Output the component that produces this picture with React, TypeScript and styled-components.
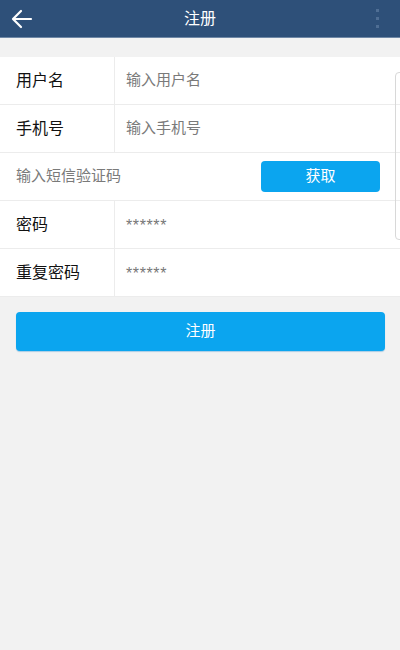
import React from "react";
import styled, { createGlobalStyle } from "styled-components";

const GlobalStyle = createGlobalStyle`
  html, body {
    margin: 0;
    padding: 0;
    background: #f2f2f2;
    font-family: "Noto Sans CJK SC", "Liberation Sans", sans-serif;
  }
`;

const Page = styled.div`
  position: relative;
  width: 400px;
  height: 650px;
  background: #f2f2f2;
  overflow: hidden;
`;

const Header = styled.header`
  height: 37px;
  background: #2e5079;
  border-bottom: 1px solid #6f88a6;
  display: flex;
  align-items: center;
  justify-content: space-between;
  padding: 0 10px 0 10px;
`;

const Title = styled.h1`
  margin: 0 0 3px 0;
  color: #ffffff;
  font-size: 16px;
  line-height: 20px;
  font-weight: 400;
`;

const IconSlot = styled.div`
  width: 24px;
  height: 24px;
  display: flex;
  align-items: center;
  justify-content: center;
`;

const Dots = styled.div`
  display: flex;
  flex-direction: column;
  gap: 5px;
  align-items: center;
`;

const Dot = styled.span`
  width: 3px;
  height: 3px;
  background: #4f6e94;
`;

const Form = styled.div`
  margin-top: 19px;
  background: #ffffff;
`;

const Row = styled.div`
  height: 47px;
  display: flex;
  align-items: stretch;
  border-bottom: 1px solid #ececec;
`;

const Label = styled.div`
  width: 98px;
  padding: 0 0 3px 16px;
  border-right: 1px solid #ececec;
  display: flex;
  align-items: center;
  font-size: 16px;
  line-height: 20px;
  color: #111111;
`;

const Field = styled.div<{ $wide?: boolean }>`
  flex: 1;
  display: flex;
  align-items: center;
  padding: 0 0 3px ${(p) => (p.$wide ? "16px" : "11px")};
  font-size: 15px;
  line-height: 20px;
  color: #7a7a7a;
`;

const Mask = styled.span`
  margin-top: 5px;
  font-size: 16px;
  letter-spacing: 0.6px;
  color: #777777;
  font-family: "Liberation Sans", sans-serif;
`;

const GetButton = styled.button`
  margin: 8px 20px 8px 0;
  width: 119px;
  border: none;
  border-radius: 4px;
  background: #0ba5ef;
  color: #ffffff;
  font-size: 15px;
  line-height: 20px;
  padding: 0 0 3px 0;
  font-family: inherit;
`;

const SubmitWrap = styled.div`
  padding: 15px 15px 0 16px;
`;

const SubmitButton = styled.button`
  width: 100%;
  height: 39px;
  border: none;
  border-radius: 4px;
  background: #0ba5ef;
  color: #ffffff;
  font-size: 15px;
  line-height: 20px;
  padding: 0 0 3px 0;
  font-family: inherit;
  box-shadow: 0 1px 1px rgba(0, 120, 200, 0.3);
`;

const ScrollHint = styled.div`
  position: absolute;
  right: -6px;
  top: 72px;
  width: 9px;
  height: 166px;
  border: 1px solid #d8d8d8;
  border-radius: 4px;
`;

const BackArrow = () => (
  <svg width="22" height="20" viewBox="0 0 22 20" fill="none" stroke="#ffffff" strokeWidth="2.2" strokeLinecap="round" strokeLinejoin="round">
    <path d="M20 10H3" />
    <path d="M10 2L2 10l8 8" />
  </svg>
);

const rows = [
  { label: "用户名", value: "输入用户名" },
  { label: "手机号", value: "输入手机号" },
];

export default function App() {
  return (
    <Page>
      <GlobalStyle />
      <Header>
        <IconSlot>
          <BackArrow />
        </IconSlot>
        <Title>注册</Title>
        <IconSlot>
          <Dots>
            <Dot />
            <Dot />
            <Dot />
          </Dots>
        </IconSlot>
      </Header>

      <Form>
        {rows.map((r) => (
          <Row key={r.label}>
            <Label>{r.label}</Label>
            <Field>{r.value}</Field>
          </Row>
        ))}
        <Row>
          <Field $wide>输入短信验证码</Field>
          <GetButton>获取</GetButton>
        </Row>
        <Row>
          <Label>密码</Label>
          <Field>
            <Mask>******</Mask>
          </Field>
        </Row>
        <Row>
          <Label>重复密码</Label>
          <Field>
            <Mask>******</Mask>
          </Field>
        </Row>
      </Form>

      <SubmitWrap>
        <SubmitButton>注册</SubmitButton>
      </SubmitWrap>

      <ScrollHint />
    </Page>
  );
}
